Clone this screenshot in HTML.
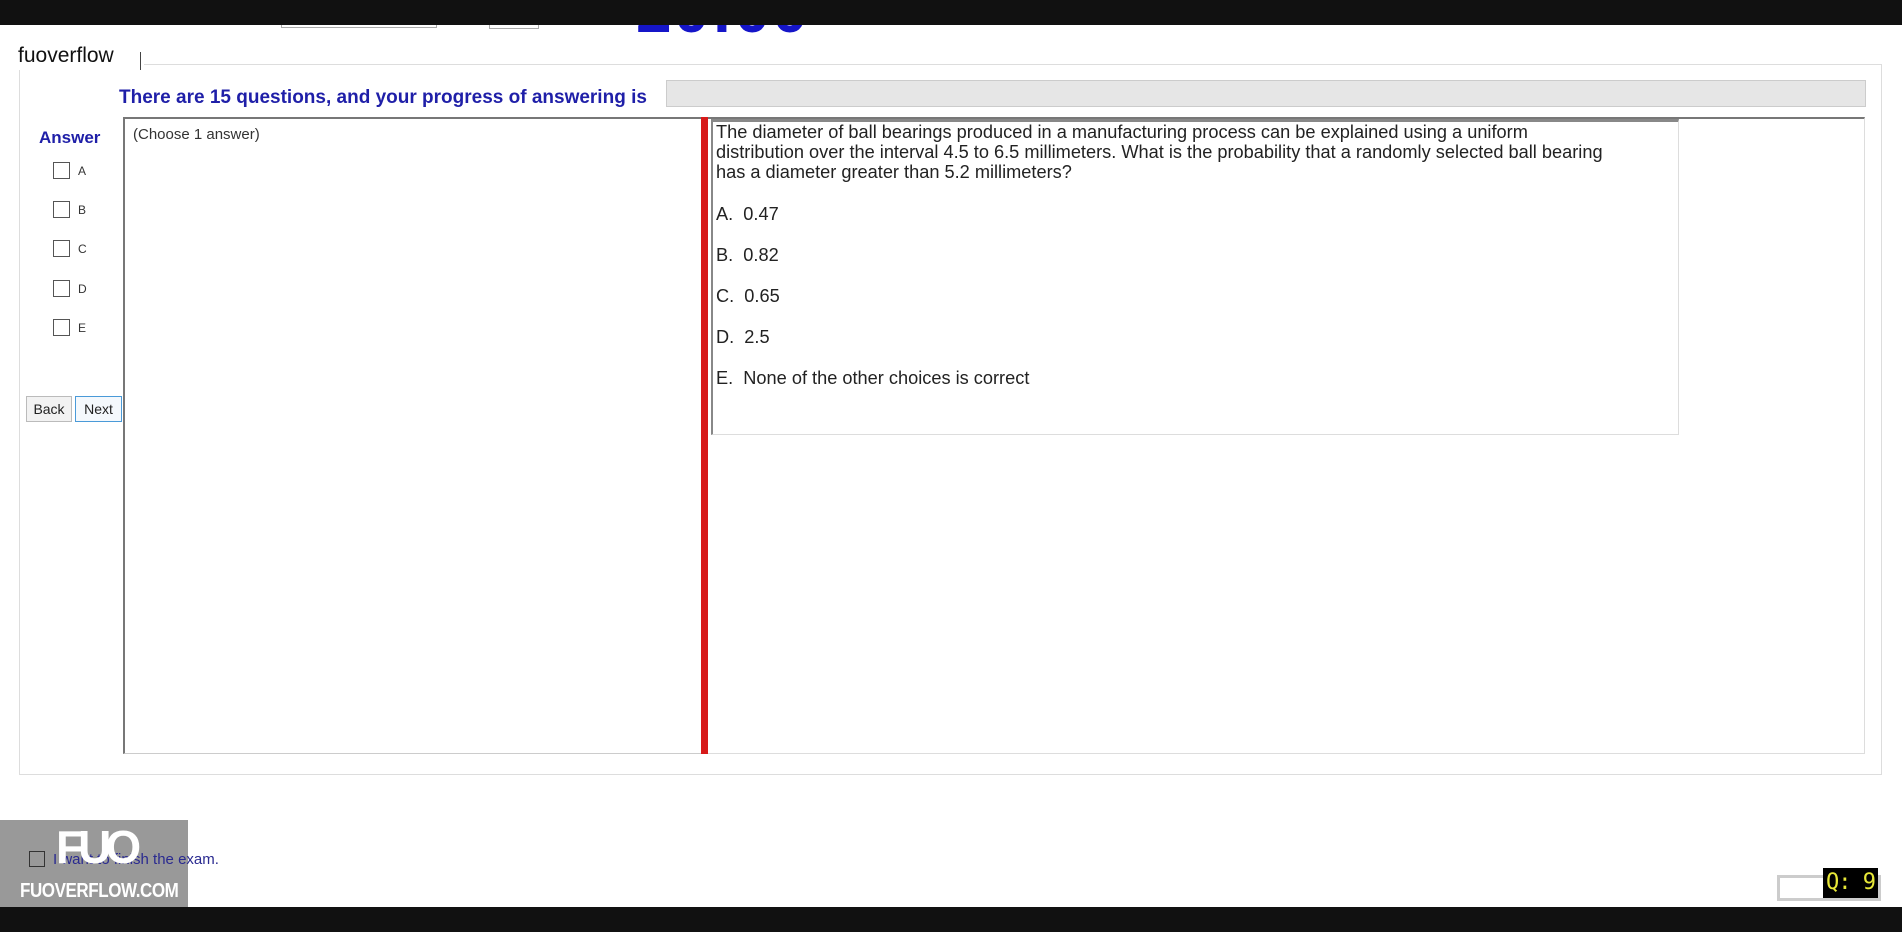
<!DOCTYPE html>
<html><head><meta charset="utf-8"><style>
*{margin:0;padding:0;box-sizing:border-box}
body{width:1902px;height:932px;background:#fff;position:relative;overflow:hidden;font-family:"Liberation Sans",Arial,sans-serif}
.a{position:absolute}
.cb{position:absolute;width:17px;height:17px;border:1.5px solid #555;background:#fff}
.lt{position:absolute;font-size:12px;color:#333}
.q{position:absolute;left:716px;font-size:18.2px;color:#222;line-height:20px;white-space:nowrap}
</style></head><body>
<div class="a" style="left:281px;top:24px;width:156px;height:4px;border:1px solid #aaa;border-top:none"></div>
<div class="a" style="left:489px;top:24px;width:50px;height:5px;border:1px solid #aaa;border-top:none"></div>
<div class="a" style="left:636px;top:-20px;font-size:64px;font-weight:bold;color:#1515c8;line-height:60px;letter-spacing:2px">20:00</div>
<div class="a" style="left:0;top:0;width:1902px;height:25px;background:#111;z-index:2"></div>
<div class="a" style="left:18px;top:44px;font-size:21px;color:#111">fuoverflow</div>
<div class="a" style="left:140px;top:52px;width:1px;height:18px;background:#444"></div>
<div class="a" style="left:144px;top:64px;width:1738px;height:711px;border:1px solid #ddd;border-left:none"></div>
<div class="a" style="left:19px;top:70px;width:1863px;height:705px;border:1px solid #ddd;border-top:none"></div>
<div class="a" style="left:119px;top:87px;font-size:19px;font-weight:bold;color:#1f1fa8;white-space:nowrap">There are 15 questions, and your progress of answering is</div>
<div class="a" style="left:666px;top:80px;width:1200px;height:27px;background:#e6e6e6;border:1px solid #ccc"></div>
<div class="a" style="left:39px;top:128px;font-size:17px;font-weight:bold;color:#1f1fa8">Answer</div>
<div class="cb" style="left:53px;top:162px"></div><div class="lt" style="left:78px;top:164px">A</div>
<div class="cb" style="left:53px;top:201px"></div><div class="lt" style="left:78px;top:203px">B</div>
<div class="cb" style="left:53px;top:240px"></div><div class="lt" style="left:78px;top:242px">C</div>
<div class="cb" style="left:53px;top:280px"></div><div class="lt" style="left:78px;top:282px">D</div>
<div class="cb" style="left:53px;top:319px"></div><div class="lt" style="left:78px;top:321px">E</div>
<div class="a" style="left:26px;top:396px;width:46px;height:26px;border:1px solid #bbb;background:#f2f2f2;font-size:14px;color:#222;text-align:center;line-height:24px">Back</div>
<div class="a" style="left:75px;top:396px;width:47px;height:26px;border:1px solid #4a9ad8;background:#f4f8fc;font-size:14px;color:#222;text-align:center;line-height:24px">Next</div>
<div class="a" style="left:123px;top:117px;width:581px;height:637px;border:2px solid #777;border-right:none;border-bottom:1px solid #ccc"></div>
<div class="a" style="left:133px;top:126px;font-size:15px;color:#333">(Choose 1 answer)</div>
<div class="a" style="left:703px;top:117px;width:1162px;height:637px;border-top:2px solid #777;border-right:1px solid #ddd;border-bottom:1px solid #ddd"></div>
<div class="a" style="left:711px;top:119px;width:968px;height:316px;border:1px solid #ddd;border-top:3px solid #888;border-left:2px solid #888"></div>
<div class="a" style="left:701px;top:117px;width:7px;height:637px;background:#d71a1a"></div>
<div class="q" style="top:122px">The diameter of ball bearings produced in a manufacturing process can be explained using a uniform<br>distribution over the interval 4.5 to 6.5 millimeters. What is the probability that a randomly selected ball bearing<br>has a diameter greater than 5.2 millimeters?</div>
<div class="q" style="top:204px">A.&nbsp; 0.47</div>
<div class="q" style="top:245px">B.&nbsp; 0.82</div>
<div class="q" style="top:286px">C.&nbsp; 0.65</div>
<div class="q" style="top:327px">D.&nbsp; 2.5</div>
<div class="q" style="top:368px">E.&nbsp; None of the other choices is correct</div>
<div class="a" style="left:0;top:820px;width:188px;height:88px;background:#999"></div>
<div class="cb" style="left:29px;top:851px;width:16px;height:16px;border-color:#333;background:transparent"></div>
<div class="a" style="left:53px;top:851px;font-size:15px;color:#2a2a90">I want to finish the exam.</div>
<div class="a" style="left:56px;top:822px;font-size:46px;font-weight:bold;color:#fff;letter-spacing:-6px;line-height:50px">FUO</div>
<div class="a" style="left:20px;top:880px;font-size:20px;font-weight:bold;color:#fff;letter-spacing:-0.5px;transform:scaleX(0.85);transform-origin:left;white-space:nowrap">FUOVERFLOW.COM</div>
<div class="a" style="left:1777px;top:875px;width:104px;height:26px;border:3px solid #ccc;background:#fff"></div>
<div class="a" style="left:1823px;top:868px;width:55px;height:30px;background:#000;color:#e8e838;font-family:'DejaVu Sans Mono',monospace;font-size:22px;line-height:30px;text-align:center;white-space:nowrap;letter-spacing:-1px">Q: 9</div>
<div class="a" style="left:0;top:907px;width:1902px;height:25px;background:#111"></div>
</body></html>
